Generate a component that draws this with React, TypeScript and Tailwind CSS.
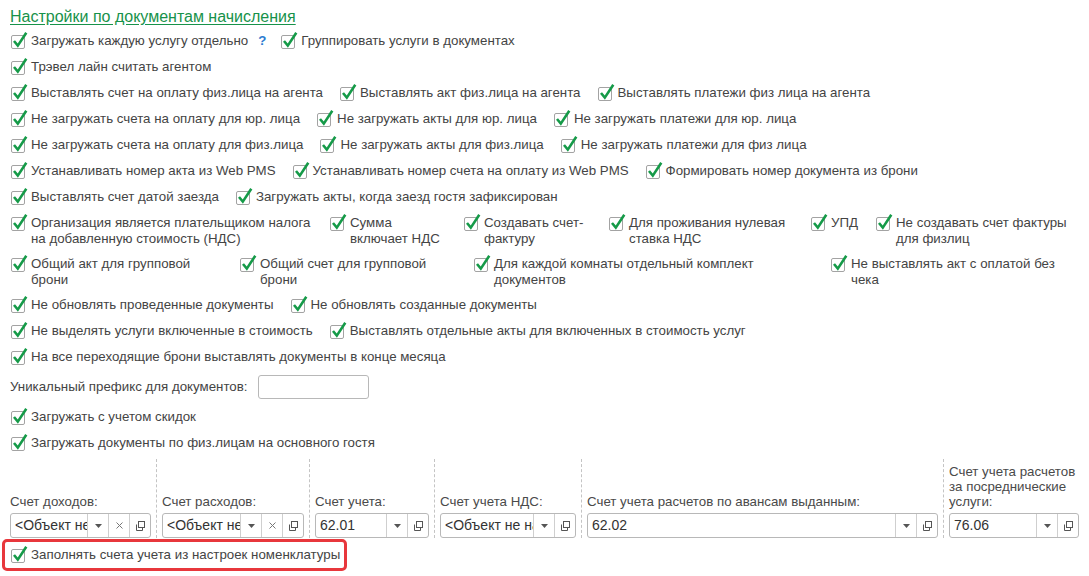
import React from 'react'

const Check = () => (
  <svg width="18" height="18" viewBox="0 0 18 18" className="shrink-0 -mt-[2px]">
    <rect x="1.5" y="4.5" width="13" height="13" rx="1.5" fill="#fff" stroke="#a3a3a3" />
    <path d="M4 10 L7.8 14.6 L16.3 1.8" fill="none" stroke="#159a48" strokeWidth="2.6" strokeLinejoin="miter" />
  </svg>
)

const Item = ({ label, className }: { label: React.ReactNode; className?: string }) => (
  <div className={`flex items-start gap-[3px] shrink-0 ${className ?? ''}`}>
    <Check />
    <span className="whitespace-nowrap">{label}</span>
  </div>
)

const Row = ({ items }: { items: string[] }) => (
  <div className="flex items-start gap-[16px]">
    {items.map((t) => (
      <Item key={t} label={t} />
    ))}
  </div>
)

const DropIcon = () => (
  <svg width="7" height="4" viewBox="0 0 7 4">
    <path d="M0 0 H7 L3.5 4 Z" fill="#555" />
  </svg>
)

const ClearIcon = () => (
  <svg width="7" height="7" viewBox="0 0 7 7">
    <path d="M0.5 0.5 L6.5 6.5 M6.5 0.5 L0.5 6.5" stroke="#777" strokeWidth="1" />
  </svg>
)

const OpenIcon = () => (
  <svg width="12" height="12" viewBox="0 0 12 12">
    <rect x="4.5" y="1.5" width="6" height="6" fill="none" stroke="#555" />
    <path d="M2.5 4.5 V10.5 H8.5 V8" fill="none" stroke="#555" />
  </svg>
)

const Field = ({
  value,
  width,
  clear,
}: {
  value: string
  width: string
  clear?: boolean
}) => (
  <div className={`flex h-[25px] border border-[#b8b8b8] rounded-[3px] bg-white ${width}`}>
    <div className="flex-1 min-w-0 overflow-hidden whitespace-nowrap pl-[4px] leading-[23px] text-[14px] text-[#333]">
      {value}
    </div>
    <div className="w-[21px] border-l border-[#cfcfcf] flex items-center justify-center">
      <DropIcon />
    </div>
    {clear && (
      <div className="w-[21px] border-l border-[#cfcfcf] flex items-center justify-center">
        <ClearIcon />
      </div>
    )}
    <div className="w-[21px] border-l border-[#cfcfcf] flex items-center justify-center">
      <OpenIcon />
    </div>
  </div>
)

const Sep = () => <div className="self-stretch w-0 border-l border-dashed border-[#c4c4c4] mx-[5px]" />

const Column = ({ label, children }: { label: React.ReactNode; children: React.ReactNode }) => (
  <div className="flex flex-col justify-end">
    <div className="leading-[15px] mb-[4px] text-[#4a4a4a]">{label}</div>
    {children}
  </div>
)

export default function App() {
  return (
    <div
      className="w-[1089px] h-[576px] overflow-hidden bg-white pl-[10px] pt-[7px] text-[13.3px] text-[#444]"
      style={{ fontFamily: '"Liberation Sans", Arial, sans-serif' }}
    >
      <div className="text-[16px] leading-[20px] text-[#17924a] underline underline-offset-[2px]">
        Настройки по документам начисления
      </div>

      <div className="mt-[6px] flex flex-col gap-[10px] leading-[16px]">
        {/* Row 1 with help mark */}
        <div className="flex items-start">
          <Item label="Загружать каждую услугу отдельно" />
          <span className="ml-[10px] mr-[14px] text-[#2b7bd0] font-bold">?</span>
          <Item label="Группировать услуги в документах" />
        </div>
        <Row items={['Трэвел лайн считать агентом']} />
        <Row
          items={[
            'Выставлять счет на оплату физ.лица на агента',
            'Выставлять акт физ.лица на агента',
            'Выставлять платежи физ лица на агента',
          ]}
        />
        <Row
          items={[
            'Не загружать счета на оплату для юр. лица',
            'Не загружать акты для юр. лица',
            'Не загружать платежи для юр. лица',
          ]}
        />
        <Row
          items={[
            'Не загружать счета на оплату для физ.лица',
            'Не загружать акты для физ.лица',
            'Не загружать платежи для физ лица',
          ]}
        />
        <Row
          items={[
            'Устанавливать номер акта из Web PMS',
            'Устанавливать номер счета на оплату из Web PMS',
            'Формировать номер документа из брони',
          ]}
        />
        <Row items={['Выставлять счет датой заезда', 'Загружать акты, когда заезд гостя зафиксирован']} />

        {/* Two-line grid rows */}
        <div className="flex items-start leading-[15.5px]">
          <Item
            className="w-[319px]"
            label={<>Организация является плательщиком налога<br />на добавленную стоимость (НДС)</>}
          />
          <Item className="w-[134px]" label={<>Сумма<br />включает НДС</>} />
          <Item className="w-[145px]" label={<>Создавать счет-<br />фактуру</>} />
          <Item className="w-[202px]" label={<>Для проживания нулевая<br />ставка НДС</>} />
          <Item className="w-[65px]" label="УПД" />
          <Item label={<>Не создавать счет фактуры<br />для физлиц</>} />
        </div>
        <div className="flex items-start leading-[15.5px]">
          <Item className="w-[229px]" label={<>Общий акт для групповой<br />брони</>} />
          <Item className="w-[234px]" label={<>Общий счет для групповой<br />брони</>} />
          <Item className="w-[357px]" label={<>Для каждой комнаты отдельный комплект<br />документов</>} />
          <Item label={<>Не выставлять акт с оплатой без<br />чека</>} />
        </div>

        <Row items={['Не обновлять проведенные документы', 'Не обновлять созданные документы']} />
        <Row
          items={[
            'Не выделять услуги включенные в стоимость',
            'Выставлять отдельные акты для включенных в стоимость услуг',
          ]}
        />
        <Row items={['На все переходящие брони выставлять документы в конце месяца']} />

        <div className="flex items-center h-[24px] gap-[10px]">
          <span>Уникальный префикс для документов:</span>
          <div className="w-[111px] h-[24px] border border-[#b8b8b8] rounded-[3px]" />
        </div>

        <Row items={['Загружать с учетом скидок']} />
        <Row items={['Загружать документы по физ.лицам на основного гостя']} />

        {/* Account fields */}
        <div className="-mt-[2px] flex items-stretch h-[79px]">
          <Column label="Счет доходов:">
            <Field value="<Объект не найден>" width="w-[141px]" clear />
          </Column>
          <Sep />
          <Column label="Счет расходов:">
            <Field value="<Объект не найден>" width="w-[142px]" clear />
          </Column>
          <Sep />
          <Column label="Счет учета:">
            <Field value="62.01" width="w-[114px]" />
          </Column>
          <Sep />
          <Column label="Счет учета НДС:">
            <Field value="<Объект не найден>" width="w-[136px]" />
          </Column>
          <Sep />
          <Column label="Счет учета расчетов по авансам выданным:">
            <Field value="62.02" width="w-[351px]" />
          </Column>
          <Sep />
          <Column label={<>Счет учета расчетов<br />за посреднические<br />услуги:</>}>
            <Field value="76.06" width="w-[130px]" />
          </Column>
        </div>

        <div className="-mt-[9px] -ml-[8px] w-[345px] h-[32px] border-[3px] border-[#e8373c] rounded-[5px] pl-[5px] flex items-center">
          <Item label="Заполнять счета учета из настроек номенклатуры" />
        </div>
      </div>
    </div>
  )
}
